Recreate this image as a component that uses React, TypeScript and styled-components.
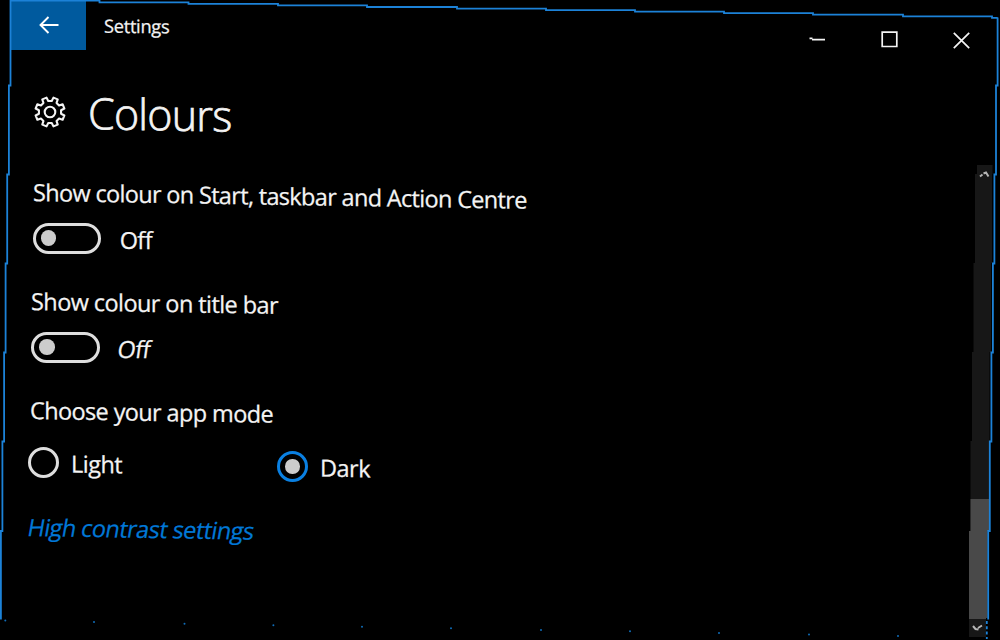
import { useState } from "react";
import styled, { createGlobalStyle } from "styled-components";

const LEFT_EDGE =
  "M10.5 0V85.5H8.9V174.5H7.2V263.5H5.6V352.5H4.1V441.5H2.4V531H0.9V619.5";
const TOP_EDGE =
  "M10 0.7H99.5V2.3H188.5V3.9H278V5.4H367V7H457V8.6H546V10.1H635V11.7H724V13.2H813V14.7H903V16.3H992V17.8H997.7";
const RIGHT_EDGE =
  "M997.6 17.5V85.5H996V174.5H994.4V263.5H992.9V352.5H991.4V441.5H989.8V531H988.2V619.5";

const DOTS = [
  [5.3, 620.5],
  [94, 622],
  [184.5, 623.7],
  [273.4, 625.2],
  [362, 626.7],
  [451, 628.3],
  [541, 630],
  [630, 631.3],
  [719, 633],
  [809, 634.5],
  [898, 636],
];

const App = () => {
  const [startColour, setStartColour] = useState(false);
  const [titleColour, setTitleColour] = useState(false);
  const [mode, setMode] = useState("dark");

  return (
    <Window>
      <GlobalStyle />
      <TitleBar>
        <BackButton aria-label="Back">
          <svg width="20" height="18" viewBox="0 0 20 18">
            <path d="M9.5 1L1.5 9L9.5 17M1.5 9H19.5" />
          </svg>
        </BackButton>
        <WindowTitle>Settings</WindowTitle>
        <WindowButtons>
          <svg width="17" height="17" viewBox="0 0 17 17">
            <path d="M0.5 7.3H3.5M3 8.6H16" />
          </svg>
          <svg width="17" height="17" viewBox="0 0 17 17">
            <path d="M1.2 1.2H15.8V15.5H1.2Z" />
          </svg>
          <svg width="17" height="17" viewBox="0 0 17 17">
            <path d="M0.8 0.8L16.2 16.2M16.2 0.8L0.8 16.2" />
          </svg>
        </WindowButtons>
      </TitleBar>
      <Main>
        <Content>
          <Header>
            <Gear />
            <Heading>Colours</Heading>
          </Header>
          <Label $indent={32.5} $top={27} $spacing={-0.67}>
            Show colour on Start, taskbar and Action Centre
          </Label>
          <Row $indent={32.7} $top={14.5}>
            <Toggle onClick={() => setStartColour(!startColour)}>
              <Knob $on={startColour} />
            </Toggle>
            <Value>{startColour ? "On" : "Off"}</Value>
          </Row>
          <Label $indent={31} $top={31} $spacing={-0.58}>
            Show colour on title bar
          </Label>
          <Row $indent={31} $top={14.5}>
            <Toggle onClick={() => setTitleColour(!titleColour)}>
              <Knob $on={titleColour} />
            </Toggle>
            <Value $slant={-8}>{titleColour ? "On" : "Off"}</Value>
          </Row>
          <Label $indent={29.5} $top={31} $spacing={-0.62}>
            Choose your app mode
          </Label>
          <Modes>
            <Mode $width={249} onClick={() => setMode("light")}>
              <Radio $checked={mode === "light"} />
              <ModeName>Light</ModeName>
            </Mode>
            <Mode $width={100} $drop={4.3} onClick={() => setMode("dark")}>
              <Radio $checked={mode === "dark"} />
              <ModeName>Dark</ModeName>
            </Mode>
          </Modes>
          <ContrastLink $indent={27.5} $top={28} $spacing={-0.57} $slant={-10}>
            High contrast settings
          </ContrastLink>
        </Content>
        <ScrollBar>
          <ScrollButton $height={20}>
            <svg width="11" height="7" viewBox="0 0 11 7">
              <path d="M1 5.5L3.5 3.5M4.5 2.5L7 1.5L9.5 5.5" />
            </svg>
          </ScrollButton>
          <Track>
            <Thumb />
          </Track>
          <ScrollButton $height={18}>
            <svg width="11" height="7" viewBox="0 0 11 7">
              <path d="M1 2L3.5 5L6.5 5.5M6 4L10 1.5" />
            </svg>
          </ScrollButton>
        </ScrollBar>
      </Main>
      <Frame viewBox="0 0 1000 640">
        <path d={LEFT_EDGE} />
        <path d={TOP_EDGE} />
        <path d={RIGHT_EDGE} />
        <path d="M986.8 621V639" strokeDasharray="3 2.3" />
        {DOTS.map(([x, y]) => (
          <circle key={x} cx={x} cy={y} r="1" />
        ))}
      </Frame>
    </Window>
  );
};

const teeth = 8;
const gearPath = () => {
  const points: string[] = [];
  for (let i = 0; i < teeth; i++) {
    const mid = (i * 360) / teeth + 22.5;
    [
      [-13.5, 11.2],
      [-9, 14.8],
      [9, 14.8],
      [13.5, 11.2],
    ].forEach(([offset, radius]) => {
      const angle = ((mid + offset) * Math.PI) / 180;
      const x = 16 + radius * Math.cos(angle);
      const y = 16 + radius * Math.sin(angle);
      points.push(`${x.toFixed(2)} ${y.toFixed(2)}`);
    });
  }
  return `M${points.join("L")}Z`;
};

const Gear = () => (
  <GearIcon width="32" height="32" viewBox="0 0 32 32">
    <path d={gearPath()} />
    <circle cx="16" cy="16" r="5.3" />
  </GearIcon>
);

const GlobalStyle = createGlobalStyle`
  body {
    margin: 0;
    background: #000;
    overflow: hidden;
  }
`;

const Window = styled.div`
  position: relative;
  display: flex;
  flex-direction: column;
  width: 1000px;
  height: 640px;
  overflow: hidden;
  background: #000;
  color: #f4f4f4;
  font-family: "Open Sans", "Noto Sans", sans-serif;
  -webkit-text-stroke: 0.25px;
`;

const TitleBar = styled.div`
  display: flex;
  box-sizing: border-box;
  height: 60px;
  padding: 1px 0 0 11px;
`;

const BackButton = styled.button`
  display: flex;
  box-sizing: border-box;
  width: 74.5px;
  height: 49px;
  padding: 14.5px 0 0 27.5px;
  border: 0;
  background: #005a9e;

  path {
    fill: none;
    stroke: #fff;
    stroke-width: 1.9;
  }
`;

const WindowTitle = styled.div`
  margin: 11px 0 0 18.5px;
  font-size: 18.3px;
  line-height: 28px;
  letter-spacing: -0.3px;
  transform: skewY(0.5deg);
`;

const WindowButtons = styled.div`
  display: flex;
  gap: 54.7px;
  margin: 30px 30.5px 0 auto;

  svg:nth-child(2) {
    margin-top: -0.5px;
  }

  svg:nth-child(3) {
    margin-top: 1px;
  }

  path {
    fill: none;
    stroke: #f4f4f4;
    stroke-width: 1.7;
  }
`;

const Main = styled.div`
  display: flex;
  flex: 1;
`;

const Content = styled.div`
  flex: 1;
`;

const Header = styled.div`
  display: flex;
  height: 89px;
  padding-left: 34px;
`;

const GearIcon = styled.svg`
  margin-top: 36px;

  path,
  circle {
    fill: none;
    stroke: #f4f4f4;
    stroke-width: 2.1;
    stroke-linejoin: round;
  }
`;

const Heading = styled.h1`
  margin: 23px 0 0 22px;
  font-size: 43px;
  font-weight: 300;
  line-height: 60px;
  letter-spacing: -0.8px;
  transform: skewY(1deg);
  transform-origin: 0 50%;
  -webkit-text-stroke: 0.7px;
`;

const Label = styled.div<{
  $indent: number;
  $top: number;
  $spacing: number;
  $slant?: number;
}>`
  width: max-content;
  margin: ${({ $top }) => $top}px 0 0 ${({ $indent }) => $indent}px;
  font-size: 23.5px;
  line-height: 32px;
  letter-spacing: ${({ $spacing }) => $spacing}px;
  white-space: nowrap;
  transform: skew(${({ $slant }) => $slant || 0}deg, 0.9deg);
  transform-origin: 0 50%;
`;

const ContrastLink = styled(Label).attrs({ as: "a" })`
  display: block;
  color: #0078d7;
`;

const Row = styled.div<{ $indent: number; $top: number }>`
  display: flex;
  height: 31.5px;
  margin: ${({ $top }) => $top}px 0 0 ${({ $indent }) => $indent}px;
`;

const Toggle = styled.button`
  box-sizing: border-box;
  width: 68.5px;
  height: 31.3px;
  padding: 0 5px;
  border: 3px solid #dedede;
  border-radius: 16px;
  background: none;
`;

const Knob = styled.div<{ $on: boolean }>`
  width: 15.6px;
  height: 15.6px;
  margin-left: ${({ $on }) => ($on ? "auto" : "0")};
  border-radius: 50%;
  background: #ccc;
`;

const Value = styled.div<{ $slant?: number }>`
  margin-left: 18.5px;
  font-size: 23.5px;
  line-height: 34.5px;
  letter-spacing: -0.6px;
  transform: skewX(${({ $slant }) => $slant || 0}deg);
`;

const Modes = styled.div`
  display: flex;
  height: 36px;
  margin: 20.5px 0 0 28px;
`;

const Mode = styled.div<{ $width: number; $drop?: number }>`
  display: flex;
  width: ${({ $width }) => $width}px;
  margin-top: ${({ $drop }) => $drop || 0}px;
`;

const Radio = styled.div<{ $checked: boolean }>`
  display: flex;
  align-items: center;
  justify-content: center;
  box-sizing: border-box;
  width: 31px;
  height: 31px;
  border: 3px solid ${({ $checked }) => ($checked ? "#0a80e2" : "#dedede")};
  border-radius: 50%;

  &::after {
    content: "";
    width: 14.5px;
    height: 14.5px;
    border-radius: 50%;
    background: ${({ $checked }) => ($checked ? "#ccc" : "none")};
  }
`;

const ModeName = styled.div`
  margin-left: 12px;
  font-size: 23.5px;
  line-height: 35px;
  letter-spacing: -0.5px;
  transform: skewY(0.9deg);
`;

/* each 89px band of the bar sits a little further left */
const ScrollBar = styled.div`
  display: flex;
  flex-direction: column;
  width: 24px;
  height: 472px;
  margin: 105px 7px 0 0;
  clip-path: polygon(
    8px 0,
    23.5px 0,
    23.5px 9px,
    23px 9px,
    23px 98px,
    22px 98px,
    22px 187px,
    20.5px 187px,
    20.5px 276px,
    20px 276px,
    20px 366px,
    18.5px 366px,
    18.5px 453px,
    17px 453px,
    17px 472px,
    0 472px,
    0 366px,
    1.5px 366px,
    1.5px 276px,
    3px 276px,
    3px 187px,
    4.5px 187px,
    4.5px 98px,
    6px 98px,
    6px 9px,
    8px 9px
  );
`;

const ScrollButton = styled.div<{ $height: number }>`
  height: ${({ $height }) => $height}px;
  background: #171717;

  svg {
    display: block;
    margin: 6px 0 0 10px;
  }

  &:last-child svg {
    margin: 5px 0 0 3px;
  }

  path {
    fill: none;
    stroke: #b4b4b4;
    stroke-width: 2;
  }
`;

const Track = styled.div`
  display: flex;
  flex: 1;
  align-items: flex-end;
  background: #171717;
`;

const Thumb = styled.div`
  width: 24px;
  height: 120.5px;
  background: #494949;
`;

const Frame = styled.svg`
  position: absolute;
  inset: 0;
  pointer-events: none;

  path {
    fill: none;
    stroke: #1c82d8;
    stroke-width: 1.8;
  }

  circle {
    fill: #0f6cb8;
  }
`;

export default App;
